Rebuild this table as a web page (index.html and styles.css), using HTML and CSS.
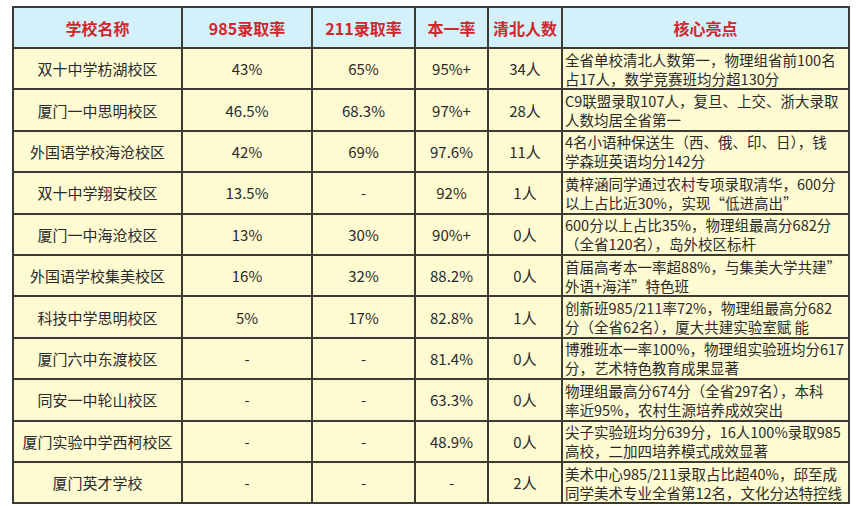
FILE: index.html
```html
<!DOCTYPE html>
<html lang="zh">
<head>
<meta charset="utf-8">
<link rel="stylesheet" href="styles.css">
</head>
<body>
<div class="wrap">
<table class="tbl">
<colgroup>
<col class="c1"><col class="c2"><col class="c3"><col class="c4"><col class="c5"><col class="c6">
</colgroup>
<thead>
<tr><th>学校名称</th><th>985录取率</th><th>211录取率</th><th>本一率</th><th>清北人数</th><th>核心亮点</th></tr>
</thead>
<tbody>
<tr><td>双十中学枋湖校区</td><td>43%</td><td>65%</td><td>95%+</td><td>34人</td><td class="hl">全省单校清北人数第一，物理组省前100名<br>占17人，数学竞赛班均分超130分</td></tr>
<tr><td>厦门一中思明校区</td><td>46.5%</td><td>68.3%</td><td>97%+</td><td>28人</td><td class="hl">C9联盟录取107人，复旦、上交、浙大录取<br>人数均居全省第一</td></tr>
<tr><td>外国语学校海沧校区</td><td>42%</td><td>69%</td><td>97.6%</td><td>11人</td><td class="hl">4名小语种保送生（西、俄、印、日），钱<br>学森班英语均分142分</td></tr>
<tr><td>双十中学翔安校区</td><td>13.5%</td><td>-</td><td>92%</td><td>1人</td><td class="hl">黄梓涵同学通过农村专项录取清华，600分<br>以上占比近30%，实现“低进高出”</td></tr>
<tr><td>厦门一中海沧校区</td><td>13%</td><td>30%</td><td>90%+</td><td>0人</td><td class="hl">600分以上占比35%，物理组最高分682分<br>（全省120名），岛外校区标杆</td></tr>
<tr><td>外国语学校集美校区</td><td>16%</td><td>32%</td><td>88.2%</td><td>0人</td><td class="hl">首届高考本一率超88%，与集美大学共建”<br>外语+海洋”特色班</td></tr>
<tr><td>科技中学思明校区</td><td>5%</td><td>17%</td><td>82.8%</td><td>1人</td><td class="hl">创新班985/211率72%，物理组最高分682<br>分（全省62名），厦大共建实验室赋 能</td></tr>
<tr><td>厦门六中东渡校区</td><td>-</td><td>-</td><td>81.4%</td><td>0人</td><td class="hl">博雅班本一率100%，物理组实验班均分617<br>分，艺术特色教育成果显著</td></tr>
<tr><td>同安一中轮山校区</td><td>-</td><td>-</td><td>63.3%</td><td>0人</td><td class="hl">物理组最高分674分（全省297名），本科<br>率近95%，农村生源培养成效突出</td></tr>
<tr><td>厦门实验中学西柯校区</td><td>-</td><td>-</td><td>48.9%</td><td>0人</td><td class="hl">尖子实验班均分639分，16人100%录取985<br>高校，二加四培养模式成效显著</td></tr>
<tr><td>厦门英才学校</td><td>-</td><td>-</td><td>-</td><td>2人</td><td class="hl">美术中心985/211录取占比超40%，邱至成<br>同学美术专业全省第12名，文化分达特控线</td></tr>
</tbody>
</table>
</div>
</body>
</html>
```
FILE: styles.css
```css
html, body {
  margin: 0;
  padding: 0;
  background: #ffffff;
}
.wrap {
  padding: 6px 13px 0 12px;
}
.tbl {
  width: 836px;
  table-layout: fixed;
  border-collapse: collapse;
  font-family: "Noto Sans CJK SC", "Noto Sans", sans-serif;
  color: #2a2a2a;
  font-size: 15px;
}
.c1 { width: 169px; }
.c2 { width: 130px; }
.c3 { width: 103px; }
.c4 { width: 73px; }
.c5 { width: 74px; }
.c6 { width: 287px; }
.tbl th, .tbl td {
  border: 2px solid #3b3a33;
  text-align: center;
  vertical-align: middle;
  padding: 0;
  white-space: nowrap;
  overflow: hidden;
}
.tbl th {
  background: #d3f1fb;
  color: #d3262c;
  font-size: 16px;
  font-weight: 700;
  height: 39px;
  line-height: 20px;
}
.tbl td {
  background: #fefad2;
  height: 39.4px;
  line-height: 19px;
}
.tbl td.hl {
  text-align: left;
  padding: 0 0 0 2px;
  font-size: 14.5px;
}
```
